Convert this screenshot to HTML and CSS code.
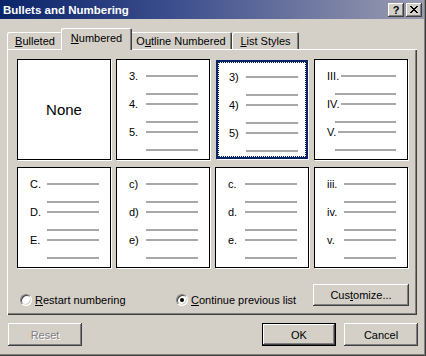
FILE: index.html
```html
<!DOCTYPE html>
<html>
<head>
<meta charset="utf-8">
<link rel="stylesheet" href="styles.css">
</head>
<body>
<div class="window">
  <div class="titlebar">
    <span class="title">Bullets and Numbering</span>
    <span class="tb-btn help">?</span>
    <span class="tb-btn close">
      <svg width="8" height="7" viewBox="0 0 8 7"><path d="M0 0h2v1h-2zM6 0h2v1h-2zM1 1h2v1h-2zM5 1h2v1h-2zM2 2h4v1h-4zM3 3h2v1h-2zM2 4h4v1h-4zM1 5h2v1h-2zM5 5h2v1h-2zM0 6h2v1h-2zM6 6h2v1h-2z" fill="#000"/></svg>
    </span>
  </div>
  <div class="tabs">
    <div class="tab t1"><u>B</u>ulleted</div>
    <div class="tab t2 active"><u>N</u>umbered</div>
    <div class="tab t3">O<u>u</u>tline Numbered</div>
    <div class="tab t4"><u>L</u>ist Styles</div>
  </div>
  <div class="panel">
    <div class="gallery">
      <div class="cell none">None</div>
      <div class="cell">
        <div class="item"><div class="row1"><span class="lbl">3.</span><span class="ln"></span></div><span class="ln ln2"></span></div>
        <div class="item"><div class="row1"><span class="lbl">4.</span><span class="ln"></span></div><span class="ln ln2"></span></div>
        <div class="item"><div class="row1"><span class="lbl">5.</span><span class="ln"></span></div><span class="ln ln2"></span></div>
      </div>
      <div class="cell sel">
        <div class="item"><div class="row1"><span class="lbl">3)</span><span class="ln"></span></div><span class="ln ln2"></span></div>
        <div class="item"><div class="row1"><span class="lbl">4)</span><span class="ln"></span></div><span class="ln ln2"></span></div>
        <div class="item"><div class="row1"><span class="lbl">5)</span><span class="ln"></span></div><span class="ln ln2"></span></div>
      </div>
      <div class="cell roman">
        <div class="item"><div class="row1"><span class="lbl">III.</span><span class="ln"></span></div><span class="ln ln2"></span></div>
        <div class="item"><div class="row1"><span class="lbl">IV.</span><span class="ln"></span></div><span class="ln ln2"></span></div>
        <div class="item"><div class="row1"><span class="lbl">V.</span><span class="ln"></span></div><span class="ln ln2"></span></div>
      </div>
      <div class="cell">
        <div class="item"><div class="row1"><span class="lbl">C.</span><span class="ln"></span></div><span class="ln ln2"></span></div>
        <div class="item"><div class="row1"><span class="lbl">D.</span><span class="ln"></span></div><span class="ln ln2"></span></div>
        <div class="item"><div class="row1"><span class="lbl">E.</span><span class="ln"></span></div><span class="ln ln2"></span></div>
      </div>
      <div class="cell">
        <div class="item"><div class="row1"><span class="lbl">c)</span><span class="ln"></span></div><span class="ln ln2"></span></div>
        <div class="item"><div class="row1"><span class="lbl">d)</span><span class="ln"></span></div><span class="ln ln2"></span></div>
        <div class="item"><div class="row1"><span class="lbl">e)</span><span class="ln"></span></div><span class="ln ln2"></span></div>
      </div>
      <div class="cell">
        <div class="item"><div class="row1"><span class="lbl">c.</span><span class="ln"></span></div><span class="ln ln2"></span></div>
        <div class="item"><div class="row1"><span class="lbl">d.</span><span class="ln"></span></div><span class="ln ln2"></span></div>
        <div class="item"><div class="row1"><span class="lbl">e.</span><span class="ln"></span></div><span class="ln ln2"></span></div>
      </div>
      <div class="cell">
        <div class="item"><div class="row1"><span class="lbl">iii.</span><span class="ln"></span></div><span class="ln ln2"></span></div>
        <div class="item"><div class="row1"><span class="lbl">iv.</span><span class="ln"></span></div><span class="ln ln2"></span></div>
        <div class="item"><div class="row1"><span class="lbl">v.</span><span class="ln"></span></div><span class="ln ln2"></span></div>
      </div>
    </div>
    <div class="options">
      <label class="radio r1"><span class="rb"></span><span><u>R</u>estart numbering</span></label>
      <label class="radio r2"><span class="rb on"><span class="dot"></span></span><span><u>C</u>ontinue previous list</span></label>
      <div class="btn customize">Cus<u>t</u>omize...</div>
    </div>
  </div>
  <div class="footer">
    <div class="btn disabled">Reset</div>
    <div class="spacer"></div>
    <div class="btn default">OK</div>
    <div class="btn">Cancel</div>
  </div>
</div>
</body>
</html>
```
FILE: styles.css
```css
html, body {
  margin: 0;
  padding: 0;
  background: #d4d0c8;
}
.window {
  width: 426px;
  height: 356px;
  box-sizing: border-box;
  padding: 0 2px 2px 0;
  background: #d4d0c8;
  box-shadow: inset -1px -1px #404040, inset -2px -2px #808080;
  font-family: "Liberation Sans", Arial, sans-serif;
  font-size: 11px;
  color: #000;
  display: flex;
  flex-direction: column;
}
.titlebar {
  height: 19px;
  flex: none;
  display: flex;
  align-items: center;
  padding: 0 2px 0 3px;
  background: linear-gradient(90deg, #0a246a 0%, #3b4d8c 40%, #9a9cb0 100%);
}
.title {
  flex: 1;
  color: #fff;
  font-weight: bold;
  font-size: 11.5px;
  letter-spacing: 0;
}
.tb-btn {
  width: 16px;
  height: 14px;
  box-sizing: border-box;
  background: #d4d0c8;
  box-shadow: inset -1px -1px #404040, inset 1px 1px #fff, inset -2px -2px #808080;
  display: flex;
  align-items: center;
  justify-content: center;
  font-weight: bold;
  font-size: 11px;
  line-height: 1;
}
.tb-btn.close {
  margin-left: 2px;
}
.tb-btn.help {
  padding-top: 1px;
}
.tabs {
  height: 30px;
  flex: none;
  display: flex;
  align-items: flex-end;
  padding-left: 7px;
  position: relative;
  z-index: 1;
}
.tab {
  height: 17px;
  box-sizing: border-box;
  padding-top: 3px;
  text-align: center;
  background: #d4d0c8;
  border-radius: 2px 2px 0 0;
  box-shadow: inset 1px 1px #fff, inset -1px 0 #404040, inset -2px 0 #808080;
}
.tab u, .radio u, .btn u {
  text-decoration: underline;
  text-underline-offset: 1px;
}
.t1 { width: 56px; }
.t2 { width: 67px; }
.t3 { width: 102px; }
.t4 { width: 67px; }
.tab.active {
  height: 22px;
  margin: 0 -2px -1px -2px;
  width: 71px;
  padding-top: 4px;
  position: relative;
  z-index: 2;
}
.panel {
  width: 410px;
  height: 266px;
  box-sizing: border-box;
  margin-left: 7px;
  padding: 10px 0 0 10px;
  box-shadow: inset 1px 1px #fff, inset -1px -1px #404040, inset -2px -2px #808080;
  display: flex;
  flex-direction: column;
}
.gallery {
  display: grid;
  grid-template-columns: repeat(4, 94px);
  grid-template-rows: 101px 101px;
  column-gap: 5px;
  row-gap: 7px;
}
.cell {
  background: #fff;
  border: 1px solid #000;
  box-sizing: border-box;
  box-shadow: 1px 1px 0 #fff;
  padding: 10px 0 0 12px;
  position: relative;
}
.cell.none {
  display: flex;
  align-items: center;
  justify-content: center;
  padding: 0;
  font-size: 15px;
}
.cell.sel {
  border: 2px solid #0a246a;
  margin: 1px;
  padding: 9px 0 0 11px;
}
.cell.sel::after {
  content: "";
  position: absolute;
  inset: 0;
  border: 1px dotted #0a246a;
}
.item {
  display: flex;
  flex-direction: column;
  height: 28px;
}
.row1 {
  display: flex;
  align-items: center;
  height: 12px;
}
.lbl {
  width: 17px;
  font-size: 11px;
  line-height: 12px;
}
.ln {
  display: block;
  width: 52px;
  height: 2px;
  background: #a8a8a8;
}
.ln2 {
  margin: 11px 0 0 17px;
}
.roman .row1 {
  width: 69px;
}
.roman .lbl {
  width: auto;
  margin-right: 2px;
}
.roman .row1 .ln {
  flex: 1;
  width: auto;
}
.roman .ln2 {
  width: 61px;
  margin-left: 8px;
}
.options {
  display: flex;
  align-items: center;
  margin-top: 16px;
  padding-left: 3px;
}
.radio {
  display: flex;
  align-items: center;
  gap: 3px;
  margin-top: 9px;
}
.r1 { width: 156px; }
.rb {
  width: 12px;
  height: 12px;
  box-sizing: border-box;
  border-radius: 50%;
  background: #fff;
  border: 1px solid;
  border-color: #808080 #fff #fff #808080;
  box-shadow: inset 1px 1px #404040, inset -1px -1px #d4d0c8;
  display: flex;
  align-items: center;
  justify-content: center;
}
.dot {
  width: 4px;
  height: 4px;
  border-radius: 50%;
  background: #000;
}
.btn {
  width: 74px;
  height: 23px;
  box-sizing: border-box;
  background: #d4d0c8;
  box-shadow: inset -1px -1px #404040, inset 1px 1px #fff, inset -2px -2px #808080;
  display: flex;
  align-items: center;
  justify-content: center;
}
.btn.customize {
  width: 96px;
  height: 22px;
  margin-left: auto;
  margin-right: 8px;
}
.footer {
  display: flex;
  margin-top: 8px;
  padding: 0 6px 0 8px;
  gap: 8px;
}
.spacer { flex: 1; }
.btn.disabled {
  color: #808080;
  text-shadow: 1px 1px 0 #fff;
}
.btn.default {
  box-shadow: inset 0 0 0 1px #000, inset -2px -2px #404040, inset 2px 2px #fff, inset -3px -3px #808080;
}
```
